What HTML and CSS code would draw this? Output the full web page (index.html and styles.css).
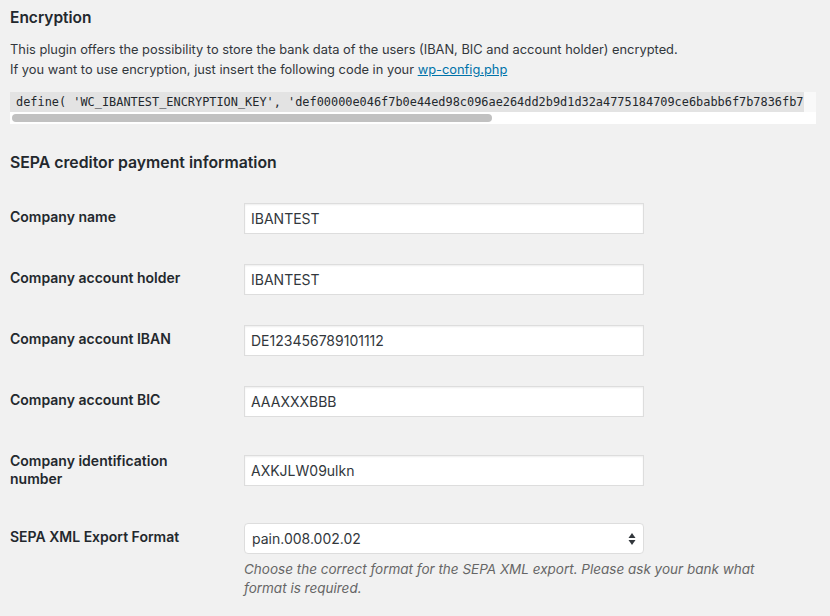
FILE: index.html
```html
<!DOCTYPE html>
<html>
<head>
<meta charset="utf-8">
<link rel="stylesheet" href="styles.css">
</head>
<body>
<div class="wrap">
  <h2 class="title">Encryption</h2>
  <p class="intro">This plugin offers the possibility to store the bank data of the users (IBAN, BIC and account holder) encrypted.<br>If you want to use encryption, just insert the following code in your <a href="#" class="link">wp-config.php</a></p>
  <div class="code-box">
    <div class="code-line"><code class="code">define( 'WC_IBANTEST_ENCRYPTION_KEY', 'def00000e046f7b0e44ed98c096ae264dd2b9d1d32a4775184709ce6babb6f7b7836fb7</code></div>
    <div class="scroll-track"><div class="scroll-thumb"></div></div>
  </div>

  <h2 class="title title-sepa">SEPA creditor payment information</h2>
  <div class="form">
    <div class="row">
      <div class="label">Company name</div>
      <div class="field"><div class="input">IBANTEST</div></div>
    </div>
    <div class="row">
      <div class="label">Company account holder</div>
      <div class="field"><div class="input">IBANTEST</div></div>
    </div>
    <div class="row">
      <div class="label">Company account IBAN</div>
      <div class="field"><div class="input">DE123456789101112</div></div>
    </div>
    <div class="row">
      <div class="label">Company account BIC</div>
      <div class="field"><div class="input">AAAXXXBBB</div></div>
    </div>
    <div class="row">
      <div class="label">Company identification number</div>
      <div class="field"><div class="input">AXKJLW09ulkn</div></div>
    </div>
    <div class="row">
      <div class="label">SEPA XML Export Format</div>
      <div class="field field-top">
        <div class="select">
          <span>pain.008.002.02</span>
          <svg class="arrows" width="8" height="14" viewBox="0 0 8 14"><path d="M4 1 L7.5 6 L0.5 6 Z" fill="#32373c"/><path d="M4 13 L7.5 8 L0.5 8 Z" fill="#32373c"/></svg>
        </div>
        <p class="description">Choose the correct format for the SEPA XML export. Please ask your bank what format is required.</p>
      </div>
    </div>
  </div>
</div>
</body>
</html>
```

FILE: styles.css
```css
html, body {
  margin: 0;
  padding: 0;
  background: #f1f1f1;
}
body {
  font-family: Inter, "Noto Sans", "Liberation Sans", sans-serif;
  color: #23282d;
  font-size: 13px;
}
.wrap {
  padding: 7px 14px 0 10px;
}
.title {
  margin: 0;
  font-size: 15.5px;
  line-height: 21px;
  font-weight: 600;
  color: #23282d;
}
.intro {
  margin: 12px 0 0;
  font-size: 12.85px;
  line-height: 20px;
  color: #32373c;
}
.link {
  color: #0073aa;
  text-decoration: underline;
}
.code-box {
  margin-top: 12px;
  width: 806px;
  background: #f9f9f9;
}
.code-line {
  display: flex;
  white-space: nowrap;
  height: 20px;
  line-height: 20px;
}
.code {
  font-family: "DejaVu Sans Mono", "Liberation Mono", monospace;
  font-size: 11.9px;
  color: #23282d;
  background: #e3e3e3;
  padding: 0 1px 0 6px;
}
.scroll-track {
  height: 12px;
  background: #fff;
  display: flex;
  align-items: center;
  padding-left: 2px;
}
.scroll-thumb {
  width: 480px;
  height: 8px;
  border-radius: 4px;
  background: #c1c1c1;
}
.title-sepa {
  margin-top: 28px;
  font-size: 15.8px;
}
.form {
  margin-top: 15px;
}
.row {
  display: flex;
  align-items: center;
}
.label {
  align-self: flex-start;
  width: 200px;
  padding: 20px 34px 20px 0;
  font-size: 14px;
  font-weight: 600;
  line-height: 18px;
  color: #23282d;
}
.field {
  padding: 15px 0;
  width: 566px;
}
.field-top {
  align-self: flex-start;
}
.input {
  box-sizing: border-box;
  width: 400px;
  height: 31px;
  border: 1px solid #ddd;
  background: #fff;
  box-shadow: inset 0 1px 2px rgba(0,0,0,0.07);
  padding: 0 6px;
  font-size: 14px;
  line-height: 29px;
  color: #32373c;
}
.select {
  box-sizing: border-box;
  width: 400px;
  height: 31px;
  border: 1px solid #ddd;
  border-radius: 4px;
  background: #fff;
  padding: 0 7px 0 7px;
  font-size: 14px;
  line-height: 29px;
  color: #32373c;
  display: flex;
  align-items: center;
  justify-content: space-between;
}
.arrows {
  display: block;
}
.description {
  margin: 6px 0 0;
  max-width: 556px;
  font-size: 13.5px;
  line-height: 19px;
  font-style: italic;
  color: #666;
}
```
